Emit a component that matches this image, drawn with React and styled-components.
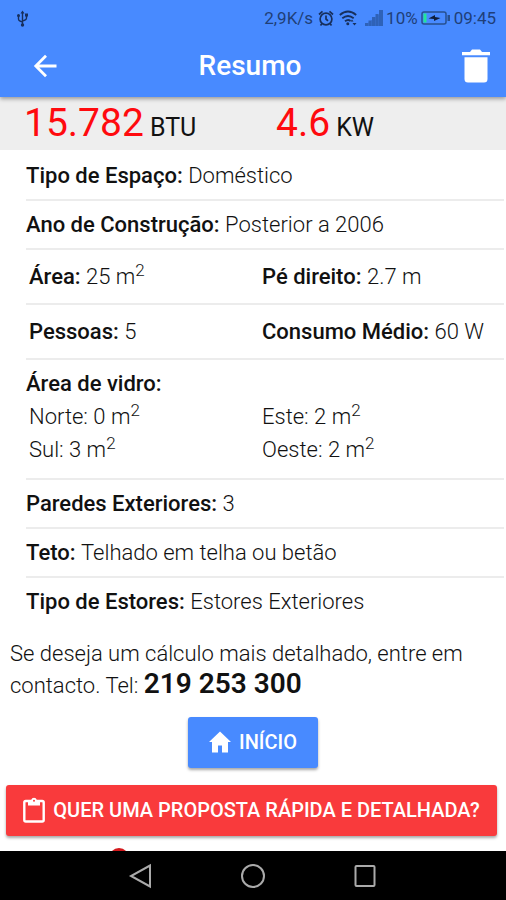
import React from 'react';
import styled, { createGlobalStyle } from 'styled-components';

const GlobalStyle = createGlobalStyle`
  * { box-sizing: border-box; }
  body { margin: 0; background: #fff; }
  button { font: inherit; border: 0; cursor: pointer; }
`;

const Screen = styled.div`
  display: flex;
  flex-direction: column;
  height: 100vh;
  font-family: Roboto, "Liberation Sans", sans-serif;
  font-size: 22px;
  line-height: 32px;
  color: #111;
  background: #fff;
`;

const TopBar = styled.header`
  position: relative;
  z-index: 1;
  flex: none;
  background: #488aff;
  box-shadow: 0 2px 4px rgba(0, 0, 0, 0.35);
`;

const StatusBar = styled.div`
  display: flex;
  align-items: center;
  height: 36px;
  padding: 0 10px 0 16px;
  font-size: 17px;
  line-height: 20px;
  color: #1f3f78;
`;

const StatusGroup = styled.div`
  display: flex;
  align-items: center;
  gap: ${({ $gap }) => $gap}px;
  margin-left: ${({ $end }) => ($end ? 'auto' : '0')};
`;

const Toolbar = styled.div`
  display: grid;
  grid-template-columns: 60px 1fr 66px;
  align-items: center;
  height: 61px;
  padding-bottom: 2px;
`;

const Title = styled.h1`
  margin: 0;
  font-size: 28px;
  font-weight: 500;
  text-align: center;
  color: #fff;
`;

const ToolButton = styled.button`
  display: flex;
  justify-content: flex-end;
  padding: 0 ${({ $inset }) => $inset}px 0 0;
  background: none;
  color: #fff;
`;

const Content = styled.main`
  flex: 1;
  min-height: 0;
  overflow-y: auto;
  scrollbar-width: none;
`;

const Totals = styled.section`
  display: grid;
  grid-template-columns: 1fr 1fr;
  padding: 3px 0 3px 24px;
  column-gap: 22px;
  background: #eee;
`;

const Total = styled.p`
  display: flex;
  align-items: baseline;
  gap: 6px;
  margin: 0;
  font-size: 25px;
  line-height: 30px;
  white-space: nowrap;
`;

const Figure = styled.span`
  font-size: 39px;
  line-height: 47px;
  color: #ff0a0e;
`;

const List = styled.ul`
  margin: 0;
  padding: 0 2px 0 26px;
  list-style: none;
`;

const Item = styled.li`
  padding: ${({ $pad }) => $pad || '8px 0 7px'};
  border-bottom: 2px solid #ececec;
  &:first-child { padding-top: 10px; }
  &:last-child { border-bottom: 0; }
`;

const Pair = styled.div`
  display: grid;
  grid-template-columns: 233px 1fr;
  row-gap: 1px;
  padding-left: 3px;
  white-space: nowrap;
`;

const Label = styled.strong`
  font-weight: 500;
`;

const Heading = styled(Label)`
  display: block;
  margin-bottom: 1px;
`;

const Value = styled.span`
  font-weight: 300;
`;

const Sup = styled.sup`
  font-size: 17px;
  line-height: 0;
`;

const Contact = styled.p`
  margin: 0;
  padding: 13px 10px 0;
  font-weight: 300;
`;

const Phone = styled.strong`
  font-size: 28px;
  font-weight: 600;
  line-height: 28px;
`;

const Actions = styled.div`
  display: flex;
  flex-direction: column;
  align-items: center;
  gap: 17px;
  padding: 15px 6px 12px;
`;

const ActionButton = styled.button`
  display: flex;
  align-items: center;
  justify-content: center;
  gap: 8px;
  align-self: ${({ $wide }) => ($wide ? 'stretch' : 'center')};
  margin-right: ${({ $wide }) => ($wide ? 3 : 0)}px;
  padding: 9px ${({ $wide }) => ($wide ? 16 : 21)}px 10px;
  border-radius: 3px;
  background: ${({ $tone }) => $tone};
  box-shadow: 0 2px 3px rgba(0, 0, 0, 0.35);
  color: #fff;
  font-size: 20px;
  font-weight: 500;
  white-space: nowrap;
`;

const MapRow = styled.div`
  padding: 0 0 16px 108px;
`;

const NavBar = styled.nav`
  position: relative;
  flex: none;
  display: flex;
  align-items: center;
  justify-content: center;
  gap: 86px;
  height: 49px;
  background: #000;
`;

const NavButton = styled.button`
  display: flex;
  padding: 0;
  background: none;
`;

const UsbIcon = () => (
  <svg width="13" height="17" viewBox="0 0 13 17" fill="none" stroke="#172f5c" strokeWidth="1.4" aria-hidden="true">
    <path d="M6.500 2v13M2.500 6v3q0 2 4 3M10.500 5v3q0 2-4 3" />
    <path d="M4.500 3.500 6.500.5l2 3z" fill="#172f5c" stroke="none" />
    <circle cx="6.500" cy="15" r="1.700" fill="#172f5c" stroke="none" />
    <circle cx="2.500" cy="5.500" r="1.500" fill="#172f5c" stroke="none" />
    <path d="M9 3.500h3v3H9z" fill="#172f5c" stroke="none" />
  </svg>
);

const AlarmIcon = () => (
  <svg width="16" height="17" viewBox="0 0 16 17" fill="none" stroke="#172f5c" strokeWidth="1.700" aria-hidden="true">
    <circle cx="8" cy="9" r="5.900" />
    <path d="M8 5.500V9l2 1.800M1 4.500 4.500 1.300M15 4.500l-3.500-3.200M4 13.500l-1.500 2M12 13.500l1.500 2" />
  </svg>
);

const WifiIcon = () => (
  <svg width="18" height="16" viewBox="0 0 18 16" fill="none" stroke="#172f5c" strokeWidth="1.800" aria-hidden="true">
    <path d="M.8 5q8.200-7 16.400 0M3.300 8.300q5.700-4.600 11.400 0M6 11.300q3-2.400 5.500-.3" />
    <circle cx="8.800" cy="13.800" r="1.500" fill="#172f5c" stroke="none" />
    <path d="M11.500 11.500h3l-1.500-2zM13.500 13h4l-2 2.500z" fill="#172f5c" stroke="none" />
  </svg>
);

const SignalIcon = () => (
  <svg width="18" height="16" viewBox="0 0 18 16" fill="#2f62b8" aria-hidden="true">
    <path d="M0 13h3v3H0zM3.500 10.500h3V16h-3zM7 7h3v9H7zM10.500 4h3v12h-3zM14 0h4v16h-4z" />
    <path d="M0 15.500 18 1v15H0z" opacity=".6" />
  </svg>
);

const BatteryIcon = () => (
  <svg width="30" height="14" viewBox="0 0 30 14" fill="none" aria-hidden="true">
    <rect x="1" y="1" width="24" height="12" rx="2" stroke="#27508f" strokeWidth="1.500" />
    <path d="M26.500 4H29v6h-2.500z" fill="#27508f" />
    <path d="M2.500 2.500h3v9h-3z" fill="#22e59a" />
    <path d="M7.500 7.500 14 4v2l5.500 1L13 10V8z" fill="#101f3c" />
  </svg>
);

const BackIcon = () => (
  <svg width="24" height="24" viewBox="0 0 24 24" fill="none" stroke="#fff" strokeWidth="2.800" aria-hidden="true">
    <path d="M23.500 12H3M13 1.800 2.800 12 13 22.200" />
  </svg>
);

const TrashIcon = () => (
  <svg width="28" height="34" viewBox="0 0 28 34" fill="#fff" aria-hidden="true">
    <path d="M0 3h8l2-2.500h8L20 3h8v3.300H0zM2.500 8.300h23V30q0 3.500-3.500 3.500H6q-3.500 0-3.500-3.500z" />
  </svg>
);

const HomeIcon = () => (
  <svg width="22" height="22" viewBox="0 0 22 22" fill="#fff" aria-hidden="true">
    <path d="M11 .5 0 11h3v10.500h6v-7h4v7h6V11h3z" />
  </svg>
);

const ClipboardIcon = () => (
  <svg width="22" height="26" viewBox="0 0 22 26" fill="none" aria-hidden="true">
    <rect x="1.300" y="4" width="19.400" height="20.500" rx="1.500" stroke="#fff" strokeWidth="2.400" />
    <path d="M5 3h3.200a2.900 2.900 0 0 1 5.600 0H17v5.500H5z" fill="#fff" />
    <circle cx="11" cy="3.800" r="1" fill="#f93a3c" />
  </svg>
);

const PinIcon = () => (
  <svg width="22" height="30" viewBox="0 0 22 30" aria-hidden="true">
    <path d="M11 0a10 10 0 0 1 10 10c0 8-10 20-10 20S1 18 1 10A10 10 0 0 1 11 0z" fill="#d3191c" />
  </svg>
);

const Area = ({ value }) => (
  <Value>{value} m<Sup>2</Sup></Value>
);

const Field = ({ label, children }) => (
  <span><Label>{label}:</Label> <Value>{children}</Value></span>
);

export default function App() {
  return (
    <Screen>
      <GlobalStyle />
      <TopBar>
        <StatusBar>
          <UsbIcon />
          <StatusGroup $end $gap={5}>
            <span>2,9K/s</span>
            <AlarmIcon />
            <WifiIcon />
            <StatusGroup $gap={3}>
              <span />
              <SignalIcon />
              <span>10%</span>
              <BatteryIcon />
              <span>09:45</span>
            </StatusGroup>
          </StatusGroup>
        </StatusBar>
        <Toolbar>
          <ToolButton type="button" aria-label="Voltar" $inset={3}><BackIcon /></ToolButton>
          <Title>Resumo</Title>
          <ToolButton type="button" aria-label="Apagar" $inset={16}><TrashIcon /></ToolButton>
        </Toolbar>
      </TopBar>

      <Content>
        <Totals>
          <Total><Figure>15.782</Figure> BTU</Total>
          <Total><Figure>4.6</Figure> KW</Total>
        </Totals>

        <List>
          <Item><Field label="Tipo de Espaço">Doméstico</Field></Item>
          <Item><Field label="Ano de Construção">Posterior a 2006</Field></Item>
          <Item $pad="11px 0 10px">
            <Pair>
              <span><Label>Área:</Label> <Area value={25} /></span>
              <Field label="Pé direito">2.7 m</Field>
            </Pair>
          </Item>
          <Item $pad="11px 0 10px">
            <Pair>
              <Field label="Pessoas">5</Field>
              <Field label="Consumo Médio">60 W</Field>
            </Pair>
          </Item>
          <Item $pad="8px 0 12px">
            <Heading>Área de vidro:</Heading>
            <Pair>
              <Value>Norte: <Area value={0} /></Value>
              <Value>Este: <Area value={2} /></Value>
              <Value>Sul: <Area value={3} /></Value>
              <Value>Oeste: <Area value={2} /></Value>
            </Pair>
          </Item>
          <Item><Field label="Paredes Exteriores">3</Field></Item>
          <Item><Field label="Teto">Telhado em telha ou betão</Field></Item>
          <Item><Field label="Tipo de Estores">Estores Exteriores</Field></Item>
        </List>

        <Contact>
          Se deseja um cálculo mais detalhado, entre em contacto. Tel: <Phone>219 253 300</Phone>
        </Contact>

        <Actions>
          <ActionButton type="button" $tone="#488aff"><HomeIcon />INÍCIO</ActionButton>
          <ActionButton type="button" $wide $tone="#f93a3c"><ClipboardIcon />QUER UMA PROPOSTA RÁPIDA E DETALHADA?</ActionButton>
        </Actions>
        <MapRow><PinIcon /></MapRow>
      </Content>

      <NavBar>
        <NavButton type="button" aria-label="Anterior">
          <svg width="26" height="26" viewBox="0 0 26 26" fill="none" stroke="#aaa" strokeWidth="2"><path d="M22 2.500v21L3 13z" /></svg>
        </NavButton>
        <NavButton type="button" aria-label="Ecrã principal">
          <svg width="26" height="26" viewBox="0 0 26 26" fill="none" stroke="#aaa" strokeWidth="2"><circle cx="13" cy="13" r="11" /></svg>
        </NavButton>
        <NavButton type="button" aria-label="Recentes">
          <svg width="26" height="26" viewBox="0 0 26 26" fill="none" stroke="#aaa" strokeWidth="2"><rect x="3.500" y="3" width="19" height="20" rx="1" /></svg>
        </NavButton>
      </NavBar>
    </Screen>
  );
}
